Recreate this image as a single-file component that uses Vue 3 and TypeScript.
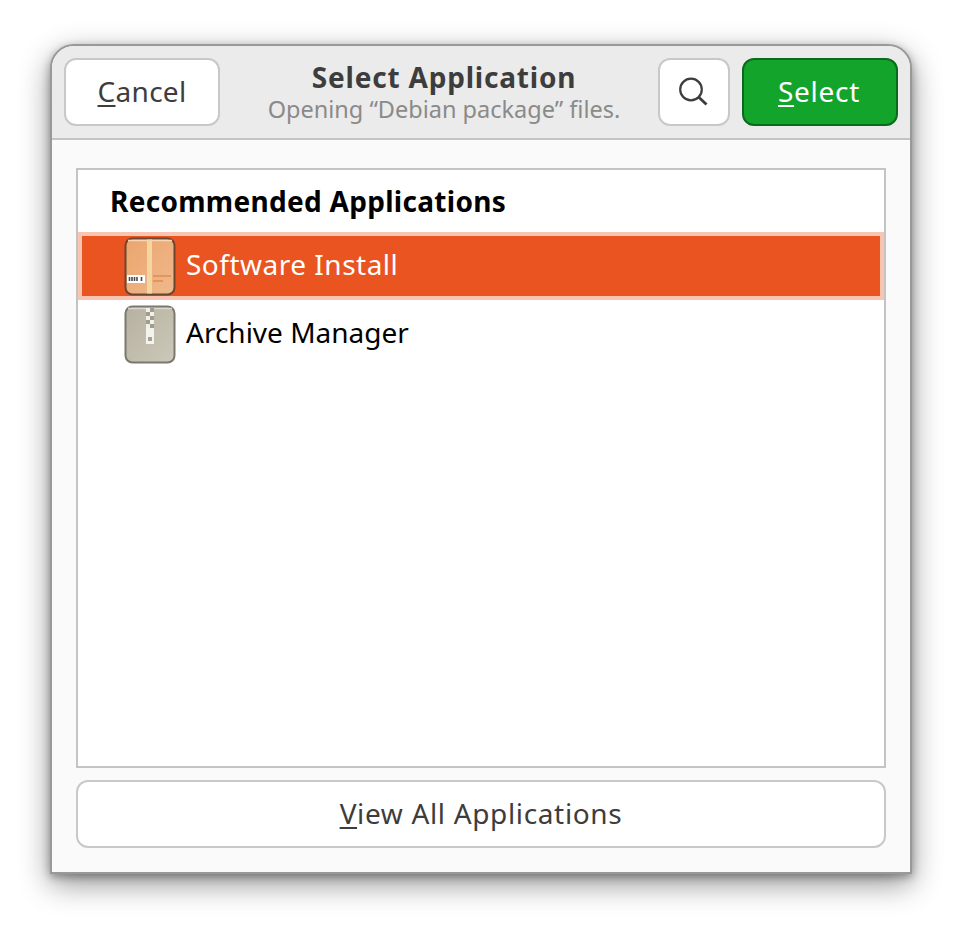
<template>
  <div class="page">
    <div class="window">
      <header class="titlebar">
        <button class="btn cancel"><u>C</u>ancel</button>
        <div class="titles">
          <div class="title">Select Application</div>
          <div class="subtitle">Opening “Debian package” files.</div>
        </div>
        <button class="btn search" aria-label="Search">
          <svg width="30" height="30" viewBox="0 0 30 30" fill="none" stroke="#3d3d3d" stroke-width="2.2">
            <circle cx="12" cy="12.500" r="10.800" />
            <path d="M19.500 20l8 7.500" stroke-width="2.800" />
          </svg>
        </button>
        <button class="btn select"><u>S</u>elect</button>
      </header>

      <main class="content">
        <section class="list">
          <h2 class="heading">Recommended Applications</h2>
          <div v-for="app in apps" :key="app.name" class="row" :class="{ selected: app.selected }">
            <svg v-if="app.kind === 'package'" class="icon" viewBox="0 0 52 60">
              <defs>
                <linearGradient id="box" x1="0" y1="0" x2="1" y2="1">
                  <stop offset="0" stop-color="#eba56d" />
                  <stop offset="1" stop-color="#efb98c" />
                </linearGradient>
              </defs>
              <rect x="1.500" y="1.500" width="49" height="56" rx="7" fill="url(#box)" stroke="#6b4630" stroke-width="2" />
              <path d="M4 3.500h44" stroke="#f8d5b5" stroke-width="1.500" />
              <rect x="23" y="2.500" width="5" height="54" fill="#f6d6a0" />
              <rect x="3" y="38" width="18" height="8" fill="#fff" />
              <path d="M5.500 40v4M8 40v4M10.500 40v4M13 40v4M17.500 40v4" stroke="#4a4a4a" stroke-width="1.600" />
              <path d="M29 39h18M29 44h10" stroke="#dc8d50" stroke-width="1.600" />
            </svg>
            <svg v-else class="icon" viewBox="0 0 52 60">
              <defs>
                <linearGradient id="zip" x1="0" y1="0" x2="1" y2="1">
                  <stop offset="0" stop-color="#b5b09f" />
                  <stop offset="1" stop-color="#cdc9ba" />
                </linearGradient>
              </defs>
              <rect x="1.500" y="1.500" width="49" height="56" rx="7" fill="url(#zip)" stroke="#7a786f" stroke-width="2" />
              <path d="M4 3.500h44" stroke="#dbd8cc" stroke-width="1.500" />
              <path d="M22 3h4v4h-4zM26 7h4v4h-4zM22 11h4v4h-4zM26 15h4v4h-4zM22 19h4v4h-4z" fill="#f1f0ea" />
              <path d="M26 3h4v4h-4zM22 7h4v4h-4zM26 11h4v4h-4zM22 15h4v4h-4zM26 19h4v4h-4z" fill="#a09d90" />
              <rect x="22" y="23" width="8" height="16" fill="#f4f3ee" />
              <rect x="24" y="32" width="4" height="4" fill="#a5a295" />
            </svg>
            <span class="app-name">{{ app.name }}</span>
          </div>
        </section>
        <button class="btn view-all"><u>V</u>iew All Applications</button>
      </main>
    </div>
  </div>
</template>

<script setup lang="ts">
interface AppEntry {
  name: string
  kind: 'package' | 'archive'
  selected?: boolean
}

const apps: AppEntry[] = [
  { name: 'Software Install', kind: 'package', selected: true },
  { name: 'Archive Manager', kind: 'archive' },
]
</script>

<style>
html,
body {
  margin: 0;
  background: #fff;
}
</style>

<style scoped>
.page {
  width: 962px;
  height: 930px;
  padding: 44px 0 0 50px;
  box-sizing: border-box;
  overflow: hidden;
  font-family: "Noto Sans", "Open Sans", sans-serif;
}

.window {
  width: 862px;
  height: 830px;
  box-sizing: border-box;
  display: flex;
  flex-direction: column;
  background: #fafafa;
  border: 2px solid #999;
  border-radius: 24px 24px 0 0;
  box-shadow: 0 10px 30px rgba(0, 0, 0, 0.42), 0 3px 9px rgba(0, 0, 0, 0.32);
  overflow: hidden;
}

.titlebar {
  flex: none;
  height: 94px;
  box-sizing: border-box;
  display: flex;
  align-items: flex-start;
  gap: 12px;
  padding: 12px 12px 0 12px;
  background: #ebebeb;
  border-bottom: 2px solid #c4c4c4;
}

.btn {
  box-sizing: border-box;
  height: 68px;
  background: #fff;
  border: 2px solid #c8c8c8;
  border-radius: 12px;
  color: #3d3d3d;
  font-family: inherit;
  font-size: 28px;
  padding: 0 0 2px;
}

.btn u {
  text-underline-offset: 3px;
  text-decoration-thickness: 2px;
}

.cancel,
.select {
  width: 156px;
}

.cancel {
  letter-spacing: 0.3px;
}

.search {
  width: 72px;
  padding: 0;
  display: flex;
  align-items: center;
  justify-content: center;
}

.select {
  background: #13a52b;
  border-color: #0c6a1c;
  color: #fff;
  letter-spacing: 0.7px;
  padding-right: 2px;
}

.titles {
  flex: 1;
  text-align: center;
  padding: 2px 0 0 10px;
}

.title {
  font-size: 28px;
  font-weight: 700;
  line-height: 34px;
  letter-spacing: 0.8px;
  color: #3d3d3d;
}

.subtitle {
  font-size: 23.500px;
  line-height: 28px;
  margin-top: 1px;
  color: #8a8a8a;
}

.content {
  flex: 1;
  display: flex;
  flex-direction: column;
  gap: 12px;
  padding: 28px 24px 24px;
}

.list {
  flex: 1;
  box-sizing: border-box;
  background: #fff;
  border: 2px solid #c4c4c4;
}

.heading {
  margin: 0;
  height: 62px;
  box-sizing: border-box;
  padding: 13px 0 0 32px;
  font-size: 28px;
  line-height: 36px;
  font-weight: 700;
  letter-spacing: 0.3px;
  color: #000;
}

.row {
  height: 68px;
  box-sizing: border-box;
  display: flex;
  align-items: center;
  gap: 10px;
  padding-left: 46px;
  font-size: 28px;
  color: #000;
}

.row.selected {
  background: #ea5420;
  border: 4px solid #f7c5b2;
  padding-left: 42px;
  color: #fff;
  letter-spacing: 0.5px;
}

.app-name {
  padding-bottom: 4px;
}

.icon {
  width: 52px;
  height: 60px;
  flex: none;
  margin-top: 2px;
}

.view-all {
  flex: none;
  width: 100%;
  letter-spacing: 0.65px;
}
</style>
